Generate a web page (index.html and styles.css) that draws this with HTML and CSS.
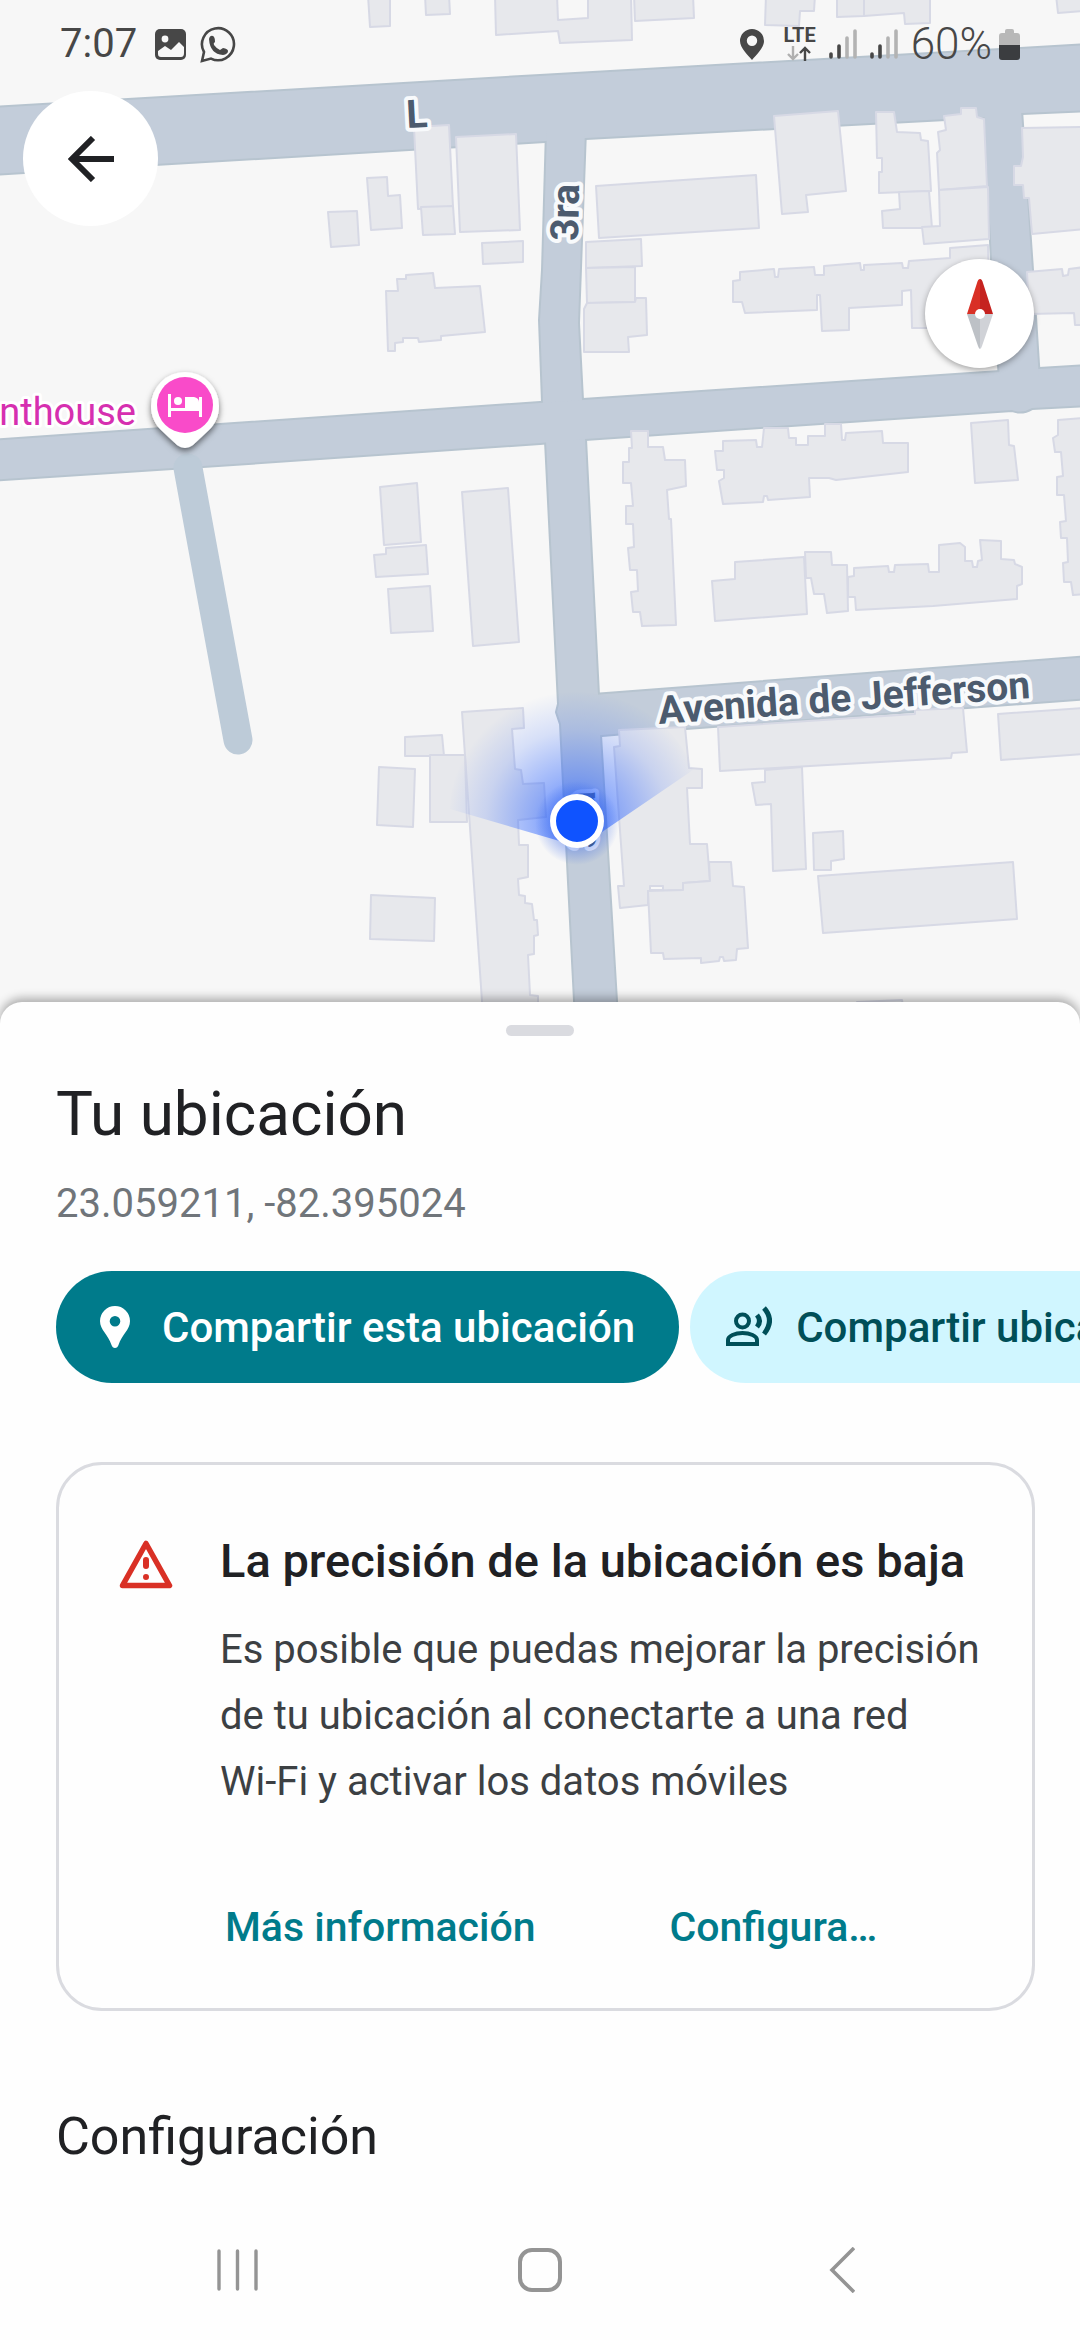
FILE: index.html
```html
<!DOCTYPE html>
<html lang="es">
<head>
<meta charset="utf-8">
<meta name="viewport" content="width=device-width, initial-scale=1">
<title>Tu ubicación</title>
<link rel="stylesheet" href="styles.css">
</head>
<body>
<div class="screen">
  <section class="map-stage" aria-label="Mapa">
    <svg class="map" viewBox="0 0 1080 1030" preserveAspectRatio="xMidYMin slice" xmlns="http://www.w3.org/2000/svg">
      <defs>
        <radialGradient id="beam" gradientUnits="userSpaceOnUse" cx="577" cy="821" r="130">
          <stop offset="0" stop-color="#2a62ff" stop-opacity=".8"/>
          <stop offset=".35" stop-color="#2a62ff" stop-opacity=".45"/>
          <stop offset=".7" stop-color="#2a62ff" stop-opacity=".16"/>
          <stop offset="1" stop-color="#2a62ff" stop-opacity="0"/>
        </radialGradient>
        <radialGradient id="halo">
          <stop offset=".5" stop-color="#1f55e8" stop-opacity=".4"/>
          <stop offset="1" stop-color="#1f55e8" stop-opacity="0"/>
        </radialGradient>
        <filter id="soft" x="-30%" y="-30%" width="160%" height="170%">
          <feDropShadow dx="0" dy="3" stdDeviation="3" flood-color="#000" flood-opacity=".55"/>
        </filter>
        <g id="roads">
          <path d="M-10 108L540 76 1090 45V110L1022 113 984 117 586 138 545 141 155 164-10 174Z"/>
          <path d="M547 130L543 270 540 320 543 402 546 441 559 704 557 712 561 724 577 1040H618L616 1001 600 735 598 695 585 439 582 400 578 323 585 130Z"/>
          <path d="M-10 441L220 425 540 403 583 400 1000 372 1039 369 1090 366V405L1032 408Q1022 414 1012 410L585 439 540 443 203 466-10 480Z"/>
          <path d="M984 110L992 260 1000 380H1039L1032 270 1021 110Z"/>
          <path d="M580 696L1090 657V698L686 728 590 736Z"/>
        </g>
      </defs>
      <rect class="ground" width="1080" height="1030"/>
      <use href="#roads" class="road-edge"/>
      <use href="#roads" class="road-fill"/>
      <path class="lane" d="M188 468L238 740"/>
      <g class="buildings">
        <path d="M368-5L370 27 390 26V-5Z"/>
        <path d="M425-5L426 15 450 14 449-5Z"/>
        <path d="M495-5L496 35 558 31 560 43 632 40 631-5H588V18L558 20 557-5Z"/>
        <path d="M634-5L635 21 694 18 693-5Z"/>
        <path d="M766-5L765 25 799 26 800 11H814L815-5Z"/>
        <path d="M837-5V17L864 16V-5M864 16L904 13 905 24 930 23V-5H864Z"/>
        <path d="M1056-5L1058 13 1085 11V-5Z"/>
        <path d="M414 127L449 125 453 207 418 209Z"/>
        <path d="M421 207L453 206 455 234 423 235Z"/>
        <path d="M456 137L516 134 520 230 460 232Z"/>
        <path d="M367 178L387 177 388 196 400 195 402 228 371 230Z"/>
        <path d="M328 212L357 211 359 245 331 247Z"/>
        <path d="M482 243L523 241V262L483 264Z"/>
        <path d="M386 291H398L397 279H406V275L433 273 435 288 480 286 485 332 441 336V340L419 342 418 338H403V342L395 343V351H388Z"/>
        <path d="M774 116L838 111 846 191 806 195 808 212 782 214Z"/>
        <path d="M596 186L756 175 759 228 599 238Z"/>
        <path d="M586 242L641 239 642 266 586 268Z"/>
        <path d="M586 268L635 267V302L587 303Z"/>
        <path d="M584 309L587 303 635 302 636 298H646L647 335 628 337 629 352H584Z"/>
        <path d="M876 112H894L897 132 920 133 921 140 928 141 931 191 879 193V172H882V158H877Z"/>
        <path d="M899 192L929 191 932 228H883L882 211 900 209Z"/>
        <path d="M944 116L961 114V108H976L977 117 984 119 987 186 939 190 937 153 940 150 938 132 946 130Z"/>
        <path d="M939 190L988 187 989 239 924 244 922 227 940 226Z"/>
        <path d="M1022 128L1085 127V229L1032 234 1029 198H1024L1023 185H1014V166H1021L1023 157Z"/>
        <path d="M733 281L740 280V272L774 269 775 277H778L779 269 814 267 815 275H824V266L860 263 861 270H864V265L902 263 903 268H908L909 261 950 258V248L988 245 990 328H912L911 290 902 291V305L849 308V330L822 331 820 295H817V310L745 313 742 302H733Z"/>
        <path d="M1027 272L1062 269 1063 276 1068 275 1069 269 1085 267V325H1075L1074 313 1029 314Z"/>
        <path d="M631 431H648V447H663L665 460H685L686 486 667 490 669 519H671L676 625 642 626 640 612H633L631 592 638 591 637 570H630L628 548 634 547 633 524H626V506H633L631 483H623V462H629V448H632Z"/>
        <path d="M715 451H723V441L756 440 757 447H762L764 428H788L789 438H796V445H808V436H825V424H841L842 440H845L846 433 882 431 883 443H908V472L836 480 829 478H809L810 497 768 500 767 496H764L763 502 723 504 719 481 724 478V470H717Z"/>
        <path d="M971 423L1008 420 1009 445 1014 446 1018 480 975 483Z"/>
        <path d="M1058 420L1085 418V594L1073 595 1071 582H1064L1063 563 1068 562 1067 538H1061L1060 522 1066 521 1064 495H1057V477L1063 476 1061 452H1055L1053 438 1058 435Z"/>
        <path d="M712 581L735 579V562L804 557 807 614 715 621Z"/>
        <path d="M805 552H831L832 565H847L848 611 827 613 824 594H814L811 578H806Z"/>
        <path d="M848 577L854 576V568L888 566 889 572H894L895 565 928 564 929 572H939V545L960 543 965 547V561H972L973 567H977L978 561 982 560 980 540 1001 541V559L1014 560 1015 564 1022 567V584L1017 586V599L933 606 856 610 855 597H848Z"/>
        <path d="M718 727L915 714V710L963 708 967 752 952 753 951 758 720 771Z"/>
        <path d="M998 714L1085 708V754L1001 760Z"/>
        <path d="M765 770L802 767 806 869 773 871 771 804 756 805 752 783 765 782Z"/>
        <path d="M813 833L843 831 844 859 831 861V870H814Z"/>
        <path d="M818 876L1013 862 1017 919 823 933Z"/>
        <path d="M619 730L685 727 689 768 702 769V788H687L690 844H707L710 881 683 883V890L648 891V905L620 908 618 886H624L614 747 620 746Z"/>
        <path d="M648 891L683 890V883L710 881 709 862H731L733 886 744 887 748 948 737 949 736 960 724 961 723 957H720L719 961 701 963V958L664 959 663 953H651Z"/>
        <path class="yard" d="M650 886H663V890H650Z"/>
        <path d="M857 1002L902 1000 905 1020H857Z"/>
        <path d="M380 487L417 483 421 542 384 545Z"/>
        <path d="M374 555L386 554V548L426 545 428 574 376 577Z"/>
        <path d="M388 589L430 586 433 631 391 633Z"/>
        <path d="M462 492L508 488 519 642 473 646Z"/>
        <path d="M462 712L523 708 524 728 512 729 515 769 521 770 523 784 544 783 546 817 518 820 519 845H528V877L518 879 519 895 525 896V903L532 904 534 920H537L538 935 534 936V954L528 955 530 995 538 996V1030H484Z"/>
        <path d="M405 737L442 735 444 756H405Z"/>
        <path d="M430 755H465L467 822H430Z"/>
        <path d="M379 767L415 769 413 827 377 825Z"/>
        <path d="M371 895L435 898 434 941 370 939Z"/>
      </g>
      <g class="street-names">
        <text transform="translate(407 128) rotate(-3)">L</text>
        <text transform="translate(578 241) rotate(-89)">3ra</text>
        <text transform="translate(596 848) rotate(-91)">3ra</text>
        <text transform="translate(659 724) rotate(-4)">Avenida de Jefferson</text>
      </g>
      <text class="place-name" x="136" y="425">nthouse</text>
      <g class="place-pin">
        <path filter="url(#soft)" fill="#fff" d="M185 372A34 34 0 0 1 219 406C219 416 215 424 209 430L193 445Q185 451 177 445L161 430C155 424 151 416 151 406A34 34 0 0 1 185 372Z"/>
        <circle cx="185" cy="405" r="28" fill="#f94bc9"/>
        <path fill="#fff" d="M168 394h3v14h14v-11h9q5 1 5 5v-5h3v20h-3v-6h-28v6h-3z"/>
        <circle cx="178" cy="401" r="4" fill="#fff"/>
      </g>
      <path fill="url(#beam)" d="M580 847L450 809C452 740 510 692 577 692 625 692 675 720 693 770Z"/>
      <circle cx="577" cy="823" r="42" fill="url(#halo)"/>
      <circle cx="577" cy="821" r="24" fill="#0f53ff" stroke="#fff" stroke-width="6"/>
    </svg>

    <div class="overlay">
      <header class="status">
        <div class="status-left">
          <span class="clock">7:07</span>
          <svg width="31" height="31" viewBox="0 0 31 31"><rect width="31" height="31" rx="5" fill="#474747"/><circle cx="10" cy="10" r="3.4" fill="#f7f7f7"/><path fill="#f7f7f7" d="M3 22l7-5 6 4 8-8 5 5v6q0 4-3 4H6q-3 0-3-3z"/></svg>
          <svg width="36" height="37" viewBox="0 0 36 37"><path fill="none" stroke="#474747" stroke-width="2.6" d="M2 35l2-9A16 16 0 1 1 11 32.600z"/><path fill="#474747" d="M9 13q1-4 4-3 2 1 2 6-2 1-1 3 3 4 6 5l3-2q5 1 5 3 0 3-5 4Q10 28 9 13z"/></svg>
        </div>
        <div class="status-right">
          <svg class="s-pin" width="24" height="31" viewBox="0 0 24 31"><path fill="#474747" fill-rule="evenodd" d="M12 0a12 12 0 0 1 12 12c0 7-8 14-12 19C8 26 0 19 0 12A12 12 0 0 1 12 0zm0 6.500a5.200 5.200 0 1 0 0 10.400 5.200 5.200 0 0 0 0-10.400z"/></svg>
          <div class="network"><span>LTE</span>
            <svg width="30" height="15" viewBox="0 0 30 15" fill="none" stroke-width="2.400"><path stroke="#b0b0b0" d="M10 0v13M5 8l5 5 5-5"/><path stroke="#474747" d="M22 15V2M17 7l5-5 5 5"/></svg></div>
          <svg class="signal" width="28" height="30" viewBox="0 0 28 30" stroke-width="3.600" stroke-linecap="round"><path stroke="#474747" d="M2 25v3M10 17v11"/><path stroke="#b3b3b3" d="M18 9v19M26 2v26"/></svg>
          <svg class="signal" width="28" height="30" viewBox="0 0 28 30" stroke-width="3.600" stroke-linecap="round"><path stroke="#474747" d="M2 25v3M10 17v11"/><path stroke="#b3b3b3" d="M18 9v19M26 2v26"/></svg>
          <span class="percent">60%</span>
          <svg width="21" height="31" viewBox="0 0 21 31"><path fill="#b8b8b8" d="M6 4V2q0-2 2-2h5q2 0 2 2v2h3q3 0 3 3v10H0V7q0-3 3-3z"/><path fill="#3b3d40" d="M0 16h21v12q0 3-3 3H3q-3 0-3-3z"/></svg>
        </div>
      </header>
      <div class="map-controls">
        <button class="round back" type="button" aria-label="Atrás">
          <svg width="46" height="46" viewBox="0 0 46 46" fill="none" stroke="#202124" stroke-width="6"><path d="M25 2L4 23 25 44M4 23H46"/></svg>
        </button>
        <button class="round compass" type="button" aria-label="Brújula">
          <svg width="26" height="70" viewBox="0 0 26 70"><path fill="#d93025" d="M13 0Q11 0 10 4L0 35H13Z"/><path fill="#c5221f" d="M13 0Q15 0 16 4L26 35H13Z"/><path fill="#bdc1c6" d="M0 35H13V70Q12 70 11 67Z"/><path fill="#d0d2d7" d="M26 35H13V70Q14 70 15 67Z"/><circle cx="13" cy="35" r="5" fill="#fff"/></svg>
        </button>
      </div>
    </div>
  </section>

  <main class="sheet">
    <div class="handle"></div>
    <div class="content">
      <h1 class="title">Tu ubicación</h1>
      <p class="coords">23.059211, -82.395024</p>

      <div class="chips">
        <button class="chip chip-main" type="button">
          <svg width="30" height="42" viewBox="0 0 30 42"><path fill="#fff" fill-rule="evenodd" d="M15 0a15 15 0 0 1 15 15c0 9-8 13-11.500 24q-1 3-3.500 3t-3.500-3C8 28 0 24 0 15A15 15 0 0 1 15 0zm0 10a5.300 5.300 0 1 0 0 10.600A5.300 5.300 0 0 0 15 10z"/></svg>
          <span>Compartir esta ubicación</span>
        </button>
        <button class="chip chip-live" type="button">
          <svg width="46" height="42" viewBox="0 0 46 42" fill="none" stroke="#004f58" stroke-width="4"><circle cx="16.500" cy="15" r="6.500"/><path d="M2 38v-4c0-4 7-7 14.500-7S31 30 31 34v4z"/><path stroke-width="5" d="M31 9q5 6 0 12M38 2q11 12 0 26"/></svg>
          <span>Compartir ubicación</span>
        </button>
      </div>

      <section class="card">
        <svg class="card-icon" width="54" height="49" viewBox="0 0 54 49"><path fill="none" stroke="#d93025" stroke-width="5.500" stroke-linejoin="round" d="M27 3.500L50.500 45.500H3.500Z"/><path stroke="#d93025" stroke-width="6" stroke-linecap="round" d="M27 20v6M27 37v0.010"/></svg>
        <div class="card-body">
          <h2 class="card-title">La precisión de la ubicación es baja</h2>
          <p class="card-text">Es posible que puedas mejorar la precisión de tu ubicación al conectarte a una red <span class="keep">Wi-Fi</span> y activar los datos móviles</p>
          <div class="card-actions">
            <button class="link" type="button">Más información</button>
            <button class="link" type="button">Configura…</button>
          </div>
        </div>
      </section>

      <h2 class="section">Configuración</h2>
    </div>
  </main>

  <nav class="navbar" aria-label="Sistema">
    <button type="button" aria-label="Recientes"><svg width="42" height="44" viewBox="0 0 42 44" stroke="#949494" stroke-width="3.400" stroke-linecap="round"><path d="M2 3v38M20.500 3v38M39 3v38"/></svg></button>
    <button type="button" aria-label="Inicio"><svg width="44" height="44" viewBox="0 0 44 44" fill="none" stroke="#949494" stroke-width="4"><rect x="2" y="2" width="40" height="40" rx="12"/></svg></button>
    <button type="button" aria-label="Volver"><svg width="26" height="46" viewBox="0 0 26 46" fill="none" stroke="#949494" stroke-width="3.600"><path d="M25 1L3 23 25 45"/></svg></button>
  </nav>
</div>
</body>
</html>
```
FILE: styles.css
```css
* { box-sizing: border-box; }

body, h1, h2, p { margin: 0; }

body {
  background: #fefefe;
  color: #202124;
  font-family: Roboto, "Liberation Sans", sans-serif;
  overflow-x: hidden;
}

button {
  border: 0;
  padding: 0;
  background: none;
  color: inherit;
  font: inherit;
  cursor: pointer;
}

svg { display: block; flex: none; }

.screen {
  display: flex;
  flex-direction: column;
  min-height: 100vh;
}

/* Map */
.map-stage { display: grid; }
.map, .overlay { grid-area: 1 / 1; }
.map { width: 100%; height: auto; }
.ground { fill: #f7f7f7; }
.road-edge { stroke: #b7c4cf; stroke-width: 4; stroke-linejoin: round; }
.road-fill { fill: #c3cdda; }
.lane { fill: none; stroke: #bdcbd8; stroke-width: 29; stroke-linecap: round; }
.buildings { fill: #e7e8ec; stroke: #d7d9e5; stroke-width: 2; stroke-linejoin: round; }
.yard { fill: #f7f7f7; }
.street-names {
  fill: #4c5b6e;
  stroke: #f8fafc;
  stroke-width: 8;
  stroke-linejoin: round;
  paint-order: stroke;
  font-size: 39px;
  font-weight: 700;
}
.place-name {
  fill: #d62fb0;
  stroke: #fff;
  stroke-width: 6;
  stroke-linejoin: round;
  paint-order: stroke;
  font-size: 38px;
  text-anchor: end;
}

/* Status bar */
.overlay { display: flex; flex-direction: column; }
.status {
  display: flex;
  justify-content: space-between;
  height: 91px;
  padding: 20px 60px 0;
  color: #474747;
  font-size: 40px;
  line-height: 48px;
}
.status-left, .status-right {
  display: flex;
  align-items: center;
  height: 48px;
}
.status-left { gap: 14px; }
.clock { margin-right: 4px; }
.status-right { gap: 13px; }
.s-pin { margin-right: 6px; }
.network {
  display: grid;
  gap: 3px;
  font-size: 20px;
  font-weight: 700;
  line-height: 15px;
}
.percent {
  margin-right: -6px;
  font-size: 44px;
  font-weight: 300;
}

/* Map buttons */
.map-controls {
  display: flex;
  justify-content: space-between;
  align-items: flex-start;
  padding: 0 46px 0 23px;
}
.round {
  display: grid;
  place-items: center;
  border-radius: 50%;
  background: #fff;
}
.back { width: 135px; height: 135px; }
.compass {
  width: 109px;
  height: 109px;
  margin-top: 168px;
  box-shadow: 0 2px 6px rgb(0 0 0 / 35%);
}

/* Bottom sheet */
.sheet {
  position: relative;
  margin-top: -28px;
  padding: 23px 0 32px;
  border-radius: 22px 22px 0 0;
  background: #fefefe;
  box-shadow: 0 -4px 10px rgb(0 0 0 / 30%);
  clip-path: inset(-30px 0 0 0);
}
.handle {
  width: 68px;
  height: 11px;
  margin: 0 auto;
  border-radius: 6px;
  background: #dadbe0;
}
.content { padding: 42px 45px 0 56px; }
.title {
  font-size: 62px;
  font-weight: 400;
  line-height: 72px;
}
.coords {
  margin-top: 30px;
  color: #70757a;
  font-size: 40px;
  line-height: 48px;
}

.chips {
  display: flex;
  gap: 11px;
  margin: 43px -45px 0 0;
  overflow: hidden;
}
.chip {
  display: flex;
  flex: none;
  align-items: center;
  height: 112px;
  border-radius: 56px;
  font-size: 42px;
  font-weight: 500;
  white-space: nowrap;
}
.chip-main {
  gap: 32px;
  padding: 0 44px;
  background: #007b8b;
  color: #fff;
}
.chip-live {
  gap: 24px;
  padding: 0 36px;
  background: #d0f6ff;
  color: #004f58;
}

.card {
  display: flex;
  gap: 47px;
  margin-top: 79px;
  padding: 68px 36px 33px 60px;
  border: 3px solid #dadbe0;
  border-radius: 46px;
}
.card-icon { margin-top: 7px; }
.card-body { flex: 1; min-width: 0; }
.card-title {
  font-size: 47px;
  font-weight: 500;
  line-height: 56px;
}
.card-text {
  margin-top: 28px;
  color: #3c4043;
  font-size: 40px;
  line-height: 66px;
}
.keep { white-space: nowrap; }
.card-actions {
  display: flex;
  gap: 134px;
  margin-top: 64px;
  padding-left: 5px;
}
.link {
  height: 96px;
  color: #007b8b;
  font-size: 41px;
  font-weight: 500;
}

.section {
  margin-top: 96px;
  font-size: 52px;
  font-weight: 400;
  line-height: 60px;
}

/* System navigation */
.navbar {
  display: grid;
  grid-template-columns: repeat(3, 1fr);
  height: 141px;
  margin-top: auto;
  padding: 0 87px;
}
.navbar button { display: grid; place-items: center; }
```
